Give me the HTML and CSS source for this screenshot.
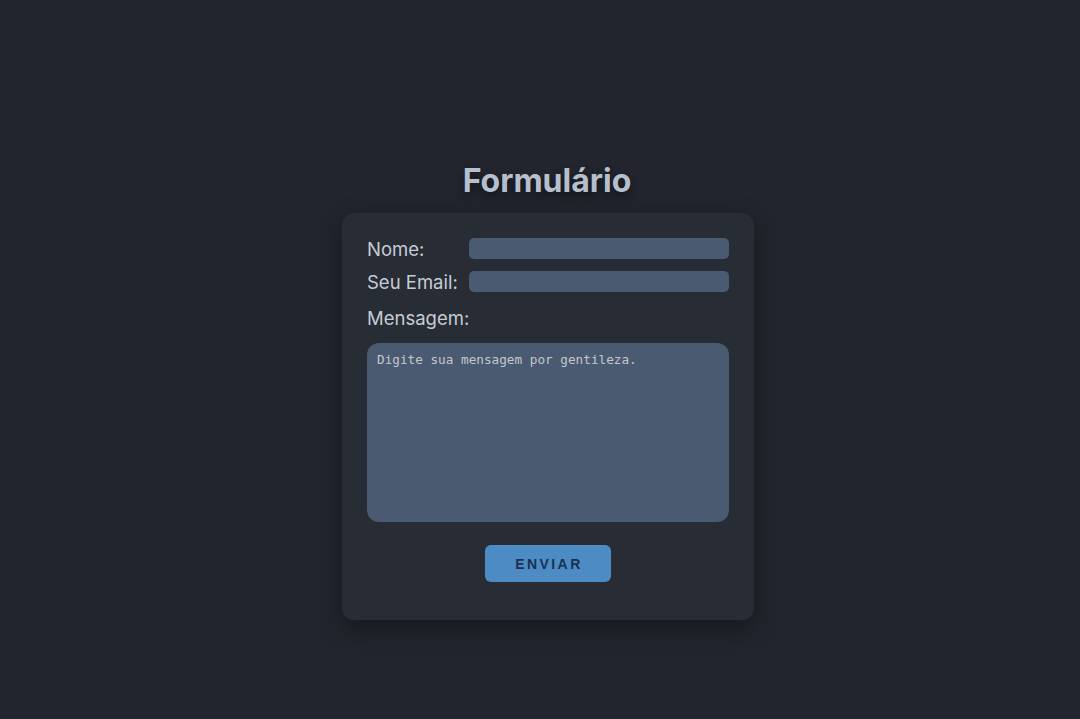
FILE: index.html
```html
<!DOCTYPE html>
<html lang="pt">
<head>
<meta charset="utf-8">
<title>Formulário</title>
<link rel="stylesheet" href="styles.css">
</head>
<body>
<main class="page">
  <h1 class="title">Formulário</h1>
  <form class="card">
    <div class="row">
      <label class="label" for="nome">Nome:</label>
      <input class="field" id="nome" type="text">
    </div>
    <div class="row">
      <label class="label" for="email">Seu Email:</label>
      <input class="field" id="email" type="email">
    </div>
    <label class="label msg-label" for="msg">Mensagem:</label>
    <textarea class="area" id="msg" placeholder="Digite sua mensagem por gentileza."></textarea>
    <div class="actions">
      <button class="btn" type="button">ENVIAR</button>
    </div>
  </form>
</main>
</body>
</html>
```

FILE: styles.css
```css
html, body {
  margin: 0;
  padding: 0;
  height: 100%;
}
body {
  background: #22252d;
  font-family: "Inter", "Lato", sans-serif;
}
.page {
  display: flex;
  flex-direction: column;
  align-items: center;
  padding-top: 160px;
}
.title {
  margin: 0 0 11px 0;
  font-size: 32px;
  font-weight: 700;
  color: #b6bfcc;
  letter-spacing: 0;
  line-height: 42px;
  text-shadow: 0 4px 8px rgba(0,0,0,0.45);
  transform: translateX(7px);
}
.card {
  box-sizing: border-box;
  width: 412px;
  height: 407px;
  background: #282c35;
  border-radius: 12px;
  box-shadow: 0 8px 24px rgba(0,0,0,0.35);
  padding: 25px 25px 0 25px;
  display: flex;
  flex-direction: column;
  transform: translateX(8px);
}
.row {
  display: flex;
  align-items: center;
  height: 21px;
  margin-bottom: 12px;
}
.label {
  color: #c5ccd6;
  font-size: 18.5px;
  font-weight: 400;
  letter-spacing: 0;
}
.row .label {
  width: 102px;
  flex: none;
}
.field {
  box-sizing: border-box;
  width: 260px;
  height: 21px;
  border: none;
  border-radius: 5px;
  background: #4a5a70;
  outline: none;
}
.msg-label {
  margin-top: 3px;
  line-height: 22px;
}
.area {
  box-sizing: border-box;
  margin-top: 14px;
  width: 362px;
  height: 179px;
  border: none;
  border-radius: 12px;
  background: #4a5a70;
  resize: none;
  padding: 9px 10px;
  font-family: "DejaVu Sans Mono", monospace;
  font-size: 12.7px;
  color: #c8ccd2;
  outline: none;
}
.area::placeholder {
  color: #c3c7cd;
  opacity: 1;
}
.actions {
  display: flex;
  justify-content: center;
  margin-top: 23px;
}
.btn {
  width: 126px;
  height: 37px;
  border: none;
  border-radius: 6px;
  background: #4d8bc4;
  color: #1b3152;
  font-family: "Liberation Sans", Arial, sans-serif;
  font-size: 14px;
  font-weight: 700;
  letter-spacing: 2.4px;
  padding: 0 0 0 2px;
  cursor: pointer;
}
```
